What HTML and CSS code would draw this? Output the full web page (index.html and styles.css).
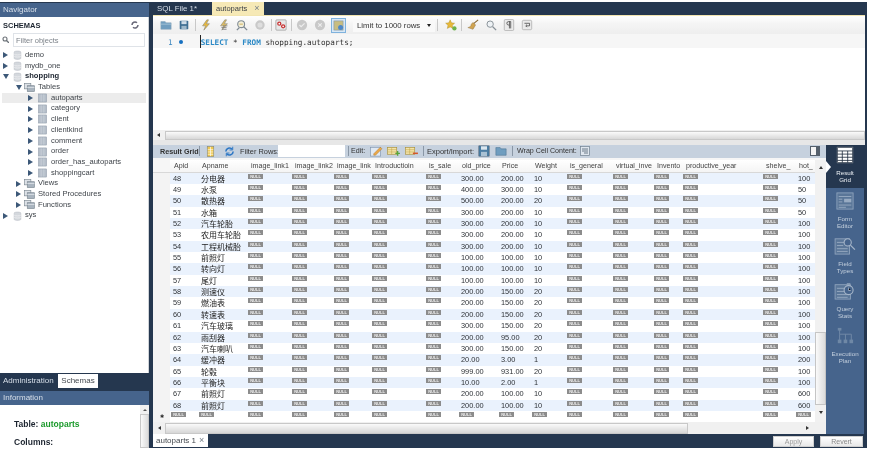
FILE: index.html
```html
<!DOCTYPE html>
<html lang="en">
<head>
<meta charset="utf-8">
<title>MySQL Workbench</title>
<link rel="stylesheet" href="styles.css">
</head>
<body>
<svg class="defs" width="0" height="0">
  <symbol id="db" viewBox="0 0 10 12"><path d="M1 2.500C1 .8 9 .8 9 2.500V10c0 1.700-8 1.700-8 0z" fill="#d4d8dd" stroke="#b4b9c0" stroke-width=".6"/><path d="M1 5c1 1.200 7 1.200 8 0M1 7.500c1 1.200 7 1.200 8 0" fill="none" stroke="#f4f5f6" stroke-width=".8"/></symbol>
  <symbol id="tbl" viewBox="0 0 10 10"><rect x=".5" y=".5" width="9" height="9" fill="#b5bec9" stroke="#8f9aa8" stroke-width=".6"/><path d="M3.500 1v8M6.500 1v8" stroke="#d3d9e0" stroke-width=".7"/></symbol>
  <symbol id="grp" viewBox="0 0 12 10"><rect x=".5" y=".5" width="7" height="6" fill="#dde2e8" stroke="#79858f" stroke-width=".7"/><rect x="3.500" y="3" width="8" height="6.500" fill="#a9b4bf" stroke="#79858f" stroke-width=".7"/><path d="M3.500 5h8" stroke="#eef1f4" stroke-width=".7"/></symbol>
  <symbol id="bolt" viewBox="0 0 14 14"><path d="M8 1L3 8h3.500L4.500 13 11 5.500H7.500L10 1z" fill="#e7b83c" stroke="#8c8c80" stroke-width=".7"/></symbol>
  <symbol id="boltc" viewBox="0 0 14 14"><path d="M8 1L3 8h3.500L4.500 13 11 5.500H7.500L10 1z" fill="#dcbb62" stroke="#8c8c80" stroke-width=".7"/><path d="M4 10h6M5 12h5M6 8h5" stroke="#777" stroke-width=".9"/></symbol>
  <symbol id="mag" viewBox="0 0 14 14"><circle cx="6" cy="6" r="4" fill="#f2eed8" stroke="#7f8a93" stroke-width="1.300"/><path d="M9 9l4 4M1 13l3-3" stroke="#7f8a93" stroke-width="1.500"/><path d="M4 6h4" stroke="#c8a94a"/></symbol>
  <symbol id="grid" viewBox="0 0 12 12"><rect x="2.500" y=".5" width="7" height="11" fill="#f0c94f" stroke="#8b8b7a" stroke-width=".7"/><path d="M6 1v10M3 4h6M3 6.500h6M3 9h6" stroke="#fff" stroke-width=".7"/></symbol>
  <symbol id="addrow" viewBox="0 0 14 12"><rect x=".5" y="1.500" width="10" height="7.500" fill="#f4e4a8" stroke="#a98f38" stroke-width=".7"/><path d="M1 4h9M1 6.500h9M5 2v7" stroke="#b99c3c" stroke-width=".5"/><path d="M9 8h5M11.500 5.500v5" stroke="#57a53a" stroke-width="1.500"/></symbol>
  <symbol id="delrow" viewBox="0 0 14 12"><rect x=".5" y="1.500" width="10" height="7.500" fill="#f4e4a8" stroke="#a98f38" stroke-width=".7"/><path d="M1 4h9M1 6.500h9M5 2v7" stroke="#b99c3c" stroke-width=".5"/><path d="M8.500 8h5.500" stroke="#d4562a" stroke-width="1.700"/></symbol>
  <symbol id="rgrid" viewBox="0 0 20 20"><rect x="1" y="1" width="18" height="18" fill="#fff"/><path d="M1.500 1.500h17v17h-17zM1.500 5.500h17M1.500 9h17M1.500 12.500h17M1.500 16h17M7 5.500v13M13 5.500v13" fill="none" stroke="#1d2a3b" stroke-width=".9"/></symbol>
  <symbol id="rform" viewBox="0 0 20 20"><rect x="1" y="1" width="18" height="18" fill="#5a7698" stroke="#8ea3bc"/><path d="M3 5h14M3 14.500h14M3 17h8" stroke="#98abc2"/><rect x="9" y="7.500" width="8" height="4" fill="#98abc2"/><path d="M3 8h4M3 11h4" stroke="#98abc2"/></symbol>
  <symbol id="rfield" viewBox="0 0 24 20"><rect x="1" y="2" width="16" height="17" fill="#5a7698" stroke="#8ea3bc"/><path d="M3 6h8M3 9.500h7M3 13h12M3 16h12" stroke="#98abc2"/><circle cx="15" cy="6" r="4" fill="#46648c" stroke="#a6b6c9" stroke-width="1.200"/><path d="M18 9l5 5" stroke="#a6b6c9" stroke-width="1.400"/></symbol>
  <symbol id="rquery" viewBox="0 0 24 20"><rect x="1" y="3" width="17" height="16" fill="#5a7698" stroke="#8ea3bc"/><path d="M3 7h9M3 10.500h8M3 14h12M3 17h12" stroke="#98abc2"/><circle cx="16" cy="9" r="5" fill="#46648c" stroke="#a6b6c9" stroke-width="1.200"/><path d="M16 6v3.500h2.500M14 2h4" stroke="#a6b6c9"/></symbol>
  <symbol id="rplan" viewBox="0 0 20 20"><path d="M4 3v5M4 8h13M4 8v7M10.500 8v7M17 8v7" stroke="#6f88a6" stroke-width="1.100" fill="none"/><rect x="2" y="1" width="4" height="3" fill="#6f88a6"/><rect x="2" y="14" width="4" height="4" fill="#6f88a6"/><rect x="8.500" y="14" width="4" height="4" fill="#6f88a6"/><rect x="15" y="14" width="4" height="4" fill="#6f88a6"/></symbol>
</svg>

<div class="app">
  <aside class="side">
    <div class="phead">Navigator</div>
    <div class="schemas">
      <div class="sch-title"><strong>SCHEMAS</strong>
        <svg class="sch-ico" width="8" height="8" viewBox="0 0 8 8"><path d="M1 4a3 3 0 0 1 5-2.200M7 4a3 3 0 0 1-5 2.200" fill="none" stroke="#667" stroke-width="1.500"/></svg>
      </div>
      <div class="filter">
        <svg width="7" height="7" viewBox="0 0 7 7"><circle cx="3" cy="3" r="2" fill="none" stroke="#6c7278" stroke-width="1.100"/><path d="M4.500 4.500L7 7" stroke="#6c7278" stroke-width="1.300"/></svg>
        <div class="finput">Filter objects</div>
      </div>
      <ul class="tree">
        <li class="l0"><i class="ar"></i><svg class="ic"><use href="#db"/></svg>demo</li>
        <li class="l0"><i class="ar"></i><svg class="ic"><use href="#db"/></svg>mydb_one</li>
        <li class="l0 bold"><i class="ar dn"></i><svg class="ic"><use href="#db"/></svg>shopping</li>
        <li class="l1"><i class="ar dn"></i><svg class="ic g"><use href="#grp"/></svg>Tables</li>
        <li class="l2 sel"><i class="ar"></i><svg class="ic"><use href="#tbl"/></svg>autoparts</li>
        <li class="l2"><i class="ar"></i><svg class="ic"><use href="#tbl"/></svg>category</li>
        <li class="l2"><i class="ar"></i><svg class="ic"><use href="#tbl"/></svg>client</li>
        <li class="l2"><i class="ar"></i><svg class="ic"><use href="#tbl"/></svg>clientkind</li>
        <li class="l2"><i class="ar"></i><svg class="ic"><use href="#tbl"/></svg>comment</li>
        <li class="l2"><i class="ar"></i><svg class="ic"><use href="#tbl"/></svg>order</li>
        <li class="l2"><i class="ar"></i><svg class="ic"><use href="#tbl"/></svg>order_has_autoparts</li>
        <li class="l2"><i class="ar"></i><svg class="ic"><use href="#tbl"/></svg>shoppingcart</li>
        <li class="l1"><i class="ar"></i><svg class="ic g"><use href="#grp"/></svg>Views</li>
        <li class="l1"><i class="ar"></i><svg class="ic g"><use href="#grp"/></svg>Stored Procedures</li>
        <li class="l1"><i class="ar"></i><svg class="ic g"><use href="#grp"/></svg>Functions</li>
        <li class="l0"><i class="ar"></i><svg class="ic"><use href="#db"/></svg>sys</li>
      </ul>
    </div>
    <div class="stabs"><span class="stab">Administration</span><span class="stab on">Schemas</span></div>
    <div class="phead info-head">Information</div>
    <div class="info">
      <div class="info-body">
        <p class="i1">Table: <em>autoparts</em></p>
        <p class="i2">Columns:</p>
      </div>
      <div class="info-sb"><span class="up"></span><span class="thumb"></span></div>
    </div>
  </aside>

  <main class="main">
    <div class="tabs">
      <span class="tab">SQL File 1*</span>
      <span class="tab on">autoparts <u>×</u></span>
    </div>
    <div class="sqltb">
      <svg class="ti w18" viewBox="0 0 14 14"><path d="M1 3h5l1 1.500h6V12H1z" fill="#6f9dbf" stroke="#8aa4b8" stroke-width=".6"/><path d="M1 6h12" stroke="#a9c6da"/></svg>
      <svg class="ti w18" viewBox="0 0 14 14"><rect x="2" y="2" width="10" height="10" rx="1" fill="#3f6f93"/><rect x="4" y="2.500" width="6" height="3.500" fill="#cfdde8"/><rect x="4" y="8" width="6" height="4" fill="#9fb8ca"/></svg>
      <i class="sep s1"></i>
      <svg class="ti w18"><use href="#bolt"/></svg>
      <svg class="ti w18"><use href="#boltc"/></svg>
      <svg class="ti w18"><use href="#mag"/></svg>
      <svg class="ti w18" viewBox="0 0 14 14"><circle cx="7" cy="7" r="5.500" fill="#c9c9c9"/><circle cx="7" cy="7" r="3" fill="#dedede"/></svg>
      <i class="sep s2"></i>
      <svg class="ti w14" viewBox="0 0 14 14"><rect x="1" y="1" width="12" height="12" rx="1" fill="#e8e8e8" stroke="#888" stroke-width=".7"/><circle cx="5" cy="5.500" r="2.500" fill="#c73232"/><circle cx="9.500" cy="8.500" r="2.500" fill="#c73232"/><circle cx="5" cy="5.500" r="1" fill="#fff"/><circle cx="9.500" cy="8.500" r="1" fill="#fff"/></svg>
      <i class="sep s3"></i>
      <svg class="ti w18" viewBox="0 0 14 14"><circle cx="7" cy="7" r="6" fill="#c9c9c9"/><path d="M4 7l2 2 4-4" fill="none" stroke="#eee" stroke-width="1.300"/></svg>
      <svg class="ti w18" viewBox="0 0 14 14"><circle cx="7" cy="7" r="6" fill="#c9c9c9"/><path d="M5 5l4 4M9 5l-4 4" stroke="#eee" stroke-width="1.300"/></svg>
      <svg class="ti w18 hl" viewBox="-2 -2 18 18"><rect x="1.500" y="1.500" width="11" height="11" fill="#c8bd80" stroke="#7f93a6" stroke-width=".7"/><circle cx="9.500" cy="9.500" r="3" fill="#4f88c6"/></svg>
      <div class="limit"><span>Limit to 1000 rows</span><b></b></div>
      <i class="sep s4"></i>
      <svg class="ti w14 star" viewBox="0 0 14 14"><path d="M6 1l1.600 3.500 3.600.4-2.700 2.500.8 3.600L6 9.200 2.700 11l.8-3.600L.8 4.900l3.600-.4z" fill="#e8b93a" stroke="#ab8b2a" stroke-width=".5"/><circle cx="11" cy="11" r="2.500" fill="#6db24a"/></svg>
      <i class="sep s5"></i>
      <svg class="ti w18" viewBox="0 0 14 14"><path d="M13 1L7 6" stroke="#8a6a35" stroke-width="1.400"/><path d="M7 4l3 3-3 5-6-2c2 0 4-2 4-4z" fill="#d0a451" stroke="#8a6a35" stroke-width=".5"/></svg>
      <svg class="ti w18" viewBox="0 0 14 14"><circle cx="6" cy="6" r="3.700" fill="#eef2f5" stroke="#868f96" stroke-width="1.100"/><path d="M9 9l4 4" stroke="#868f96" stroke-width="1.500"/></svg>
      <svg class="ti w18" viewBox="0 0 14 14"><rect x="1.500" y=".5" width="11" height="13" rx="1.500" fill="#eaeaea" stroke="#9a9a9a" stroke-width=".7"/><path d="M9 3H6.500a2 2 0 0 0 0 4H7.500M7.500 3v8M9 3v8" fill="none" stroke="#444" stroke-width=".9"/></svg>
      <svg class="ti w18" viewBox="0 0 14 14"><rect x="1.500" y="1.500" width="11" height="11" rx="1.500" fill="#eaeaea" stroke="#9a9a9a" stroke-width=".7"/><path d="M4 5h6v3H6M7 6.500L5.500 8 7 9.500" fill="none" stroke="#444" stroke-width=".9"/></svg>
    </div>
    <div class="editor">
      <div class="code"><span class="ln">1</span><span class="dot"></span><span class="caret"></span><code><s>SELECT</s> * <s>FROM</s> shopping.autoparts;</code></div>
      <div class="hsb edsb"><span class="al"></span><span class="bar"></span></div>
    </div>
    <div class="gap"></div>
    <div class="lower">
      <div class="res">
        <div class="rtb">
          <strong class="rg">Result Grid</strong><i class="sep2"></i>
          <svg class="b1" width="11" height="11"><use href="#grid"/></svg>
          <svg class="b2" width="11" height="11" viewBox="0 0 12 12"><path d="M2 6a4 4 0 0 1 7-2.500M10 6a4 4 0 0 1-7 2.500" fill="none" stroke="#2c76c4" stroke-width="1.700"/><path d="M9.500.8v3.500H6M2.500 11.200V7.700H6" fill="none" stroke="#2c76c4" stroke-width="1"/></svg>
          <span class="l1t">Filter Rows:</span>
          <span class="frow"></span><i class="sep2 s8"></i>
          <span class="e1">Edit:</span>
          <svg class="b3" width="13" height="12" viewBox="0 0 14 12"><rect x=".5" y="2" width="11" height="9.500" fill="#dfe8f2" stroke="#7e94ad" stroke-width=".7"/><path d="M4 9l7-7 2 1.500-7 7H4z" fill="#e9a94a" stroke="#a56a24" stroke-width=".4"/></svg>
          <svg class="b4" width="13" height="11"><use href="#addrow"/></svg>
          <svg class="b4 b4b" width="13" height="11"><use href="#delrow"/></svg><i class="sep2 s6"></i>
          <span class="e2">Export/Import:</span>
          <svg class="b5" width="12" height="12" viewBox="0 0 14 14"><rect x="1" y="1" width="12" height="12" fill="#4b7da3" stroke="#345" stroke-width=".5"/><rect x="3.500" y="1.500" width="7" height="4" fill="#dbe6ee"/><rect x="3.500" y="8" width="7" height="5" fill="#a9c1d3"/></svg>
          <svg class="b6" width="12" height="12" viewBox="0 0 14 14"><path d="M1 3h5l1 1.500h6V12H1z" fill="#6f9dbf" stroke="#48708e" stroke-width=".6"/></svg><i class="sep2 s7"></i>
          <span class="e3">Wrap Cell Content:</span>
          <svg class="b7" width="10" height="10" viewBox="0 0 10 10"><rect x=".5" y=".5" width="9" height="9" fill="#dfe6ee" stroke="#70808f" stroke-width=".7"/><path d="M2 3h6M2 5h6M4 7h4" stroke="#4e5f70" stroke-width=".8"/></svg>
          <svg class="b8" width="10" height="10" viewBox="0 0 10 10"><rect x=".5" y=".5" width="9" height="9" fill="#f4f4f4" stroke="#55606c"/><rect x="6" y="1" width="3" height="8" fill="#55606c"/></svg>
        </div>
        <div class="rtop"></div>
        <div class="gridwrap">
          <div class="grid">
            <div class="row head"><i></i><span>Apid</span><span>Apname</span><span>image_link1</span><span>image_link2</span><span>image_link</span><span>Introductioin</span><span>is_sale</span><span>old_price</span><span>Price</span><span>Weight</span><span>is_general</span><span>virtual_inve</span><span>Invento</span><span>productive_year</span><span>shelve_</span><span>hot_</span></div>
            <div class="row"><i></i><span>48</span><span class="cn">分电器</span><b>NULL</b><b>NULL</b><b>NULL</b><b>NULL</b><b>NULL</b><span>300.00</span><span>200.00</span><span>10</span><b>NULL</b><b>NULL</b><b>NULL</b><b>NULL</b><b>NULL</b><span>100</span></div>
            <div class="row"><i></i><span>49</span><span class="cn">水泵</span><b>NULL</b><b>NULL</b><b>NULL</b><b>NULL</b><b>NULL</b><span>400.00</span><span>300.00</span><span>10</span><b>NULL</b><b>NULL</b><b>NULL</b><b>NULL</b><b>NULL</b><span>50</span></div>
            <div class="row"><i></i><span>50</span><span class="cn">散热器</span><b>NULL</b><b>NULL</b><b>NULL</b><b>NULL</b><b>NULL</b><span>500.00</span><span>200.00</span><span>20</span><b>NULL</b><b>NULL</b><b>NULL</b><b>NULL</b><b>NULL</b><span>50</span></div>
            <div class="row"><i></i><span>51</span><span class="cn">水箱</span><b>NULL</b><b>NULL</b><b>NULL</b><b>NULL</b><b>NULL</b><span>300.00</span><span>200.00</span><span>10</span><b>NULL</b><b>NULL</b><b>NULL</b><b>NULL</b><b>NULL</b><span>50</span></div>
            <div class="row"><i></i><span>52</span><span class="cn">汽车轮胎</span><b>NULL</b><b>NULL</b><b>NULL</b><b>NULL</b><b>NULL</b><span>300.00</span><span>200.00</span><span>10</span><b>NULL</b><b>NULL</b><b>NULL</b><b>NULL</b><b>NULL</b><span>100</span></div>
            <div class="row"><i></i><span>53</span><span class="cn">农用车轮胎</span><b>NULL</b><b>NULL</b><b>NULL</b><b>NULL</b><b>NULL</b><span>300.00</span><span>200.00</span><span>10</span><b>NULL</b><b>NULL</b><b>NULL</b><b>NULL</b><b>NULL</b><span>100</span></div>
            <div class="row"><i></i><span>54</span><span class="cn">工程机械胎</span><b>NULL</b><b>NULL</b><b>NULL</b><b>NULL</b><b>NULL</b><span>300.00</span><span>200.00</span><span>10</span><b>NULL</b><b>NULL</b><b>NULL</b><b>NULL</b><b>NULL</b><span>100</span></div>
            <div class="row"><i></i><span>55</span><span class="cn">前照灯</span><b>NULL</b><b>NULL</b><b>NULL</b><b>NULL</b><b>NULL</b><span>100.00</span><span>100.00</span><span>10</span><b>NULL</b><b>NULL</b><b>NULL</b><b>NULL</b><b>NULL</b><span>100</span></div>
            <div class="row"><i></i><span>56</span><span class="cn">转向灯</span><b>NULL</b><b>NULL</b><b>NULL</b><b>NULL</b><b>NULL</b><span>100.00</span><span>100.00</span><span>10</span><b>NULL</b><b>NULL</b><b>NULL</b><b>NULL</b><b>NULL</b><span>100</span></div>
            <div class="row"><i></i><span>57</span><span class="cn">尾灯</span><b>NULL</b><b>NULL</b><b>NULL</b><b>NULL</b><b>NULL</b><span>100.00</span><span>100.00</span><span>10</span><b>NULL</b><b>NULL</b><b>NULL</b><b>NULL</b><b>NULL</b><span>100</span></div>
            <div class="row"><i></i><span>58</span><span class="cn">测速仪</span><b>NULL</b><b>NULL</b><b>NULL</b><b>NULL</b><b>NULL</b><span>200.00</span><span>150.00</span><span>20</span><b>NULL</b><b>NULL</b><b>NULL</b><b>NULL</b><b>NULL</b><span>100</span></div>
            <div class="row"><i></i><span>59</span><span class="cn">燃油表</span><b>NULL</b><b>NULL</b><b>NULL</b><b>NULL</b><b>NULL</b><span>200.00</span><span>150.00</span><span>20</span><b>NULL</b><b>NULL</b><b>NULL</b><b>NULL</b><b>NULL</b><span>100</span></div>
            <div class="row"><i></i><span>60</span><span class="cn">转速表</span><b>NULL</b><b>NULL</b><b>NULL</b><b>NULL</b><b>NULL</b><span>200.00</span><span>150.00</span><span>20</span><b>NULL</b><b>NULL</b><b>NULL</b><b>NULL</b><b>NULL</b><span>100</span></div>
            <div class="row"><i></i><span>61</span><span class="cn">汽车玻璃</span><b>NULL</b><b>NULL</b><b>NULL</b><b>NULL</b><b>NULL</b><span>300.00</span><span>150.00</span><span>20</span><b>NULL</b><b>NULL</b><b>NULL</b><b>NULL</b><b>NULL</b><span>100</span></div>
            <div class="row"><i></i><span>62</span><span class="cn">雨刮器</span><b>NULL</b><b>NULL</b><b>NULL</b><b>NULL</b><b>NULL</b><span>200.00</span><span>95.00</span><span>20</span><b>NULL</b><b>NULL</b><b>NULL</b><b>NULL</b><b>NULL</b><span>100</span></div>
            <div class="row"><i></i><span>63</span><span class="cn">汽车喇叭</span><b>NULL</b><b>NULL</b><b>NULL</b><b>NULL</b><b>NULL</b><span>300.00</span><span>150.00</span><span>20</span><b>NULL</b><b>NULL</b><b>NULL</b><b>NULL</b><b>NULL</b><span>100</span></div>
            <div class="row"><i></i><span>64</span><span class="cn">缓冲器</span><b>NULL</b><b>NULL</b><b>NULL</b><b>NULL</b><b>NULL</b><span>20.00</span><span>3.00</span><span>1</span><b>NULL</b><b>NULL</b><b>NULL</b><b>NULL</b><b>NULL</b><span>200</span></div>
            <div class="row"><i></i><span>65</span><span class="cn">轮毂</span><b>NULL</b><b>NULL</b><b>NULL</b><b>NULL</b><b>NULL</b><span>999.00</span><span>931.00</span><span>20</span><b>NULL</b><b>NULL</b><b>NULL</b><b>NULL</b><b>NULL</b><span>100</span></div>
            <div class="row"><i></i><span>66</span><span class="cn">平衡块</span><b>NULL</b><b>NULL</b><b>NULL</b><b>NULL</b><b>NULL</b><span>10.00</span><span>2.00</span><span>1</span><b>NULL</b><b>NULL</b><b>NULL</b><b>NULL</b><b>NULL</b><span>100</span></div>
            <div class="row"><i></i><span>67</span><span class="cn">前照灯</span><b>NULL</b><b>NULL</b><b>NULL</b><b>NULL</b><b>NULL</b><span>200.00</span><span>100.00</span><span>10</span><b>NULL</b><b>NULL</b><b>NULL</b><b>NULL</b><b>NULL</b><span>600</span></div>
            <div class="row"><i></i><span>68</span><span class="cn">前照灯</span><b>NULL</b><b>NULL</b><b>NULL</b><b>NULL</b><b>NULL</b><span>200.00</span><span>100.00</span><span>10</span><b>NULL</b><b>NULL</b><b>NULL</b><b>NULL</b><b>NULL</b><span>600</span></div>
            <div class="row new"><i>✱</i><b>NULL</b><b>NULL</b><b>NULL</b><b>NULL</b><b>NULL</b><b>NULL</b><b>NULL</b><b>NULL</b><b>NULL</b><b>NULL</b><b>NULL</b><b>NULL</b><b>NULL</b><b>NULL</b><b>NULL</b><b>NULL</b></div>
          </div>
          <div class="vsb"><span class="au"></span><span class="vthumb"></span><span class="ad"></span></div>
        </div>
        <div class="hsb gridsb"><span class="al"></span><span class="bar"></span><span class="ar2"></span></div>
      </div>
      <nav class="rail">
        <div class="ri on"><svg width="20" height="20"><use href="#rgrid"/></svg><span>Result<br>Grid</span></div>
        <div class="ri"><svg width="20" height="20"><use href="#rform"/></svg><span>Form<br>Editor</span></div>
        <div class="ri"><svg width="24" height="20"><use href="#rfield"/></svg><span>Field<br>Types</span></div>
        <div class="ri"><svg width="24" height="20"><use href="#rquery"/></svg><span>Query<br>Stats</span></div>
        <div class="ri"><svg width="20" height="20"><use href="#rplan"/></svg><span>Execution<br>Plan</span></div>
      </nav>
    </div>
    <div class="foot">
      <span class="rtab">autoparts 1 <u>×</u></span>
      <span class="btn b-a">Apply</span>
      <span class="btn">Revert</span>
    </div>
  </main>
</div>
</body>
</html>
```

FILE: styles.css
```css
* { box-sizing: border-box; }
html, body { margin: 0; padding: 0; background: #fff; }
body { width: 869px; height: 451px; overflow: hidden; padding-top: 2px; font-family: "Liberation Sans", "Noto Sans CJK SC", sans-serif; font-size: 8px; color: #333; }
.defs { position: absolute; }
.app { display: flex; width: 867px; height: 446px; background: #25374f; filter: blur(.35px); }
p { margin: 0; }

/* sidebar */
.side { width: 149px; display: flex; flex-direction: column; flex: none; }
.phead { height: 14px; margin-top: 1px; padding-left: 3px; line-height: 14px; color: #d7dfe9; font-size: 8px; background: #46648c radial-gradient(#6480a3 .6px, transparent .7px) 0 0 / 2px 2px; }
.schemas { height: 356px; background: #fff; border-right: 1px solid #cfd3d8; }
.sch-title { height: 14px; padding: 2px 3px 0 3px; display: flex; justify-content: space-between; align-items: center; font-size: 7.500px; color: #1d2530; }
.sch-ico { margin-right: 6px; }
.filter { display: flex; align-items: center; gap: 3px; padding-left: 2px; height: 15px; margin-top: 1px; }
.finput { width: 132px; height: 14px; margin-left: 1px; padding-left: 2px; line-height: 13px; border: 1px solid #dfe3e8; color: #7d838a; font-size: 7.500px; }
.tree { list-style: none; margin: 3px 0 0; padding: 0; font-size: 7.600px; }
.tree li { height: 10.700px; line-height: 10.700px; display: flex; align-items: center; white-space: nowrap; color: #3f444a; }
.l0 { padding-left: 3px; }
.l1 { padding-left: 16px; }
.l2 { padding-left: 28px; }
.tree .sel { background: #ececec; margin: 0 2px 0 2px; padding-left: 26px; }
.tree .bold { font-weight: 700; color: #1d2530; }
.ar { width: 0; height: 0; border-left: 5px solid #3c5878; border-top: 3px solid transparent; border-bottom: 3px solid transparent; margin-right: 5px; flex: none; }
.ar.dn { border-left: 3px solid transparent; border-right: 3px solid transparent; border-top: 5px solid #3c5878; border-bottom: 0; margin-right: 4px; }
.l1 .ar { margin-right: 3px; }
.l1 .ar.dn { margin-right: 2px; }
.ic { width: 9px; height: 10px; margin-right: 3px; flex: none; }
.l2 .ic { margin-right: 4px; }
.ic.g { width: 11px; height: 9px; margin-right: 3px; }
.stabs { height: 14px; margin-top: 1px; display: flex; }
.stab { padding: 0 3px; line-height: 13px; color: #d7dfe9; width: 57px; }
.stab.on { background: #fff; color: #454a50; width: 40px; margin-left: 1px; text-align: center; }
.info-head { margin-top: 3px; }
.info { flex: 1; background: #fff; display: flex; }
.info-body { flex: 1; padding: 14px 0 0 14px; font-size: 8.500px; font-weight: 700; color: #1d2530; }
.info-body em { font-style: normal; color: #1c9a2c; }
.i2 { margin-top: 8px; }
.info-sb { width: 9px; background: #f0f0f0; display: flex; flex-direction: column; align-items: center; }
.up { margin-top: 4px; width: 0; height: 0; border: 2px solid transparent; border-bottom: 2px solid #555; border-top: 0; }
.thumb { width: 9px; flex: 1; margin-top: 3px; background: linear-gradient(90deg, #fafafa, #dcdcdc); border: 1px solid #c8c8c8; }

/* main */
.main { width: 712px; margin-left: 4px; display: flex; flex-direction: column; flex: none; }
.tabs { height: 13px; display: flex; align-items: flex-end; }
.tab { width: 58px; height: 13px; padding-left: 4px; line-height: 13px; color: #d7dfe9; font-size: 7.900px; }
.tab.on { width: 52px; margin-left: 1px; padding-left: 4px; background: #f6e9b6; color: #3a3f45; font-size: 7.500px; display: flex; gap: 7px; }
.tab u, .rtab u { text-decoration: none; color: #77808a; font-size: 9px; }
.sqltb { height: 19px; display: flex; align-items: center; padding-left: 4px; border-top: 1px solid #f2e5b0; background: linear-gradient(#fff, #f5f5f5 40%, #eeeeee); }
.ti { height: 12px; flex: none; }
.w18 { width: 18px; }
.w14 { width: 14px; }
.hl { outline: 1px solid #7fb2dd; outline-offset: -1px; background: #d8e8f6; height: 15px; width: 15px; margin: 0 2px; }
.sep { width: 1px; height: 12px; background: #c8c8c8; flex: none; margin: 0 2px; }
.s1 { margin: 0 1px 0 2px; }
.s3 { margin: 0 1px 0 3px; }
.limit { width: 82px; height: 13px; margin-left: 5px; padding: 0 4px; display: flex; align-items: center; justify-content: space-between; background: #f9f9f9; color: #333; font-size: 7.800px; }
.limit b { width: 0; height: 0; border: 2.500px solid transparent; border-top: 3px solid #222; border-bottom: 0; }
.star { margin: 0 1px 0 4px; }
.editor { height: 106px; background: #fff; display: flex; flex-direction: column; }
.code { height: 96px; display: flex; align-items: flex-start; background: linear-gradient(#f6f6f6 0 14px, #fff 14px); }
.ln { margin: 4px 0 0 15px; color: #3f88c0; font-family: "DejaVu Sans Mono", monospace; font-size: 7.700px; }
.dot { width: 4px; height: 4px; margin: 6px 0 0 6px; border-radius: 50%; background: #1670c0; }
.caret { width: 1px; height: 13px; margin: 1px 0 0 17px; background: #222; }
code { margin: 4px 0 0 0; font-family: "DejaVu Sans Mono", monospace; font-size: 7.700px; color: #333; }
code s { text-decoration: none; color: #2d8ac6; font-weight: 700; }
.hsb { display: flex; align-items: center; background: #f0f0f0; }
.edsb { height: 10px; padding-left: 4px; }
.al { width: 0; height: 0; border: 2.500px solid transparent; border-right: 3px solid #333; border-left: 0; flex: none; }
.edsb .bar { margin-left: 5px; flex: 1; height: 9px; background: linear-gradient(#fafafa, #d8d8d8); border: 1px solid #c8c8c8; }
.gap { height: 5px; background: #e7e7e7; }
.lower { display: flex; flex: 1; min-height: 0; }
.res { width: 673px; display: flex; flex-direction: column; background: #fff; }
.rtb { height: 13px; background: #c6d1de; display: flex; align-items: center; padding-left: 7px; color: #333; white-space: nowrap; font-size: 7.100px; }
.rtb svg, .rtb span, .rtb i, .rtb strong { flex: none; }
.rg { width: 38px; font-size: 7.200px; }
.sep2 { width: 1px; height: 10px; background: #8a97a6; margin-left: 1px; }
.b1 { margin-left: 5px; }
.b2 { margin-left: 8px; }
.l1t { margin-left: 5px; width: 38px; font-size: 7.400px; }
.frow { width: 67px; height: 12px; background: #fff; }
.s8 { margin-left: 3px; }
.e1 { margin-left: 2px; width: 15px; }
.b3 { margin-left: 4px; }
.b4 { margin-left: 4px; }
.b4b { margin-left: 5px; }
.s6 { margin-left: 5px; }
.e2 { margin-left: 3px; width: 47px; font-size: 7.500px; }
.b5 { margin-left: 4px; }
.b6 { margin-left: 5px; }
.s7 { margin-left: 5px; }
.e3 { margin-left: 4px; width: 58px; }
.b7 { margin-left: 5px; }
.b8 { margin-left: auto; margin-right: 6px; }
.rtop { height: 2px; background: #f6f6f6; }
.gridwrap { display: flex; height: 263px; }
.grid { width: 662px; flex: none; overflow: hidden; }
.row { display: grid; grid-template-columns: 17px 28px 49px 44px 42px 38px 54px 33px 40px 33px 35px 46px 41px 29px 80px 33px 20px; height: 11.350px; line-height: 12px; color: #2f3338; font-size: 7.400px; white-space: nowrap; }
.row:nth-child(even) { background: #eaf2fd; }
.row i { background: #f3f3f3; font-style: normal; font-size: 5px; text-align: center; line-height: 11px; color: #222; }
.row > span { padding-left: 3px; overflow: hidden; }
.row .cn { font-family: "Noto Sans CJK SC", sans-serif; font-size: 8px; color: #222; line-height: 12px; overflow: visible; }
.row b { justify-self: start; align-self: start; width: 15px; height: 5px; margin: 1px 0 0 1px; background: #8c8c8c; color: #eee; font-size: 4px; font-weight: 700; line-height: 5px; text-align: center; overflow: hidden; }
.row.head { height: 13px; line-height: 12px; background: linear-gradient(#fff, #f4f4f4); border-bottom: 1px solid #d8d8d8; color: #444; font-size: 7.100px; }
.row.head i { background: #f6f6f6; }
.row.head span { padding-left: 4px; }
.row.new { background: #fff; }
.vsb { width: 11px; background: #f1f1f1; display: flex; flex-direction: column; align-items: center; }
.au { margin-top: 6px; border: 2.500px solid transparent; border-bottom: 3px solid #333; border-top: 0; }
.vthumb { width: 11px; height: 73px; margin-top: 163px; background: linear-gradient(90deg, #fafafa, #dcdcdc); border: 1px solid #c5c5c5; }
.ad { margin-top: 6px; border: 2.500px solid transparent; border-top: 3px solid #333; border-bottom: 0; }
.gridsb { height: 12px; padding-left: 5px; }
.gridsb .bar { margin-left: 4px; width: 523px; height: 11px; background: linear-gradient(#fafafa, #d6d6d6); border: 1px solid #c8c8c8; }
.ar2 { margin-left: auto; margin-right: 17px; border: 2.500px solid transparent; border-left: 3px solid #333; border-right: 0; }
.rail { width: 38px; background: #46648c; display: flex; flex-direction: column; }
.ri { height: 45px; display: flex; flex-direction: column; align-items: center; padding-top: 4px; color: #c3cfdd; font-size: 6.200px; line-height: 7.200px; text-align: center; }
.ri svg { flex: none; height: 18px; }
.ri span { margin-top: 5px; }
.ri.on { background: #25374f; color: #eef2f6; height: 43px; padding-top: 1px; position: relative; }
.ri.on::before { content: ""; position: absolute; left: 0; top: 16px; border-left: 5px solid #fff; border-top: 6px solid transparent; border-bottom: 6px solid transparent; }
.foot { height: 14px; display: flex; align-items: flex-start; }
.rtab { width: 55px; height: 13px; background: #fff; padding-left: 3px; line-height: 13px; font-size: 8px; color: #454a50; display: flex; gap: 3px; }
.btn { width: 43px; height: 11px; margin: 2px 0 0 0; background: linear-gradient(#fff, #e8e8e8); border: 1px solid #cfcfcf; text-align: center; line-height: 10px; font-size: 7px; color: #8a8a8a; }
.b-a { margin-left: 565px; margin-right: 6px; width: 41px; color: #9c9c9c; }
```
